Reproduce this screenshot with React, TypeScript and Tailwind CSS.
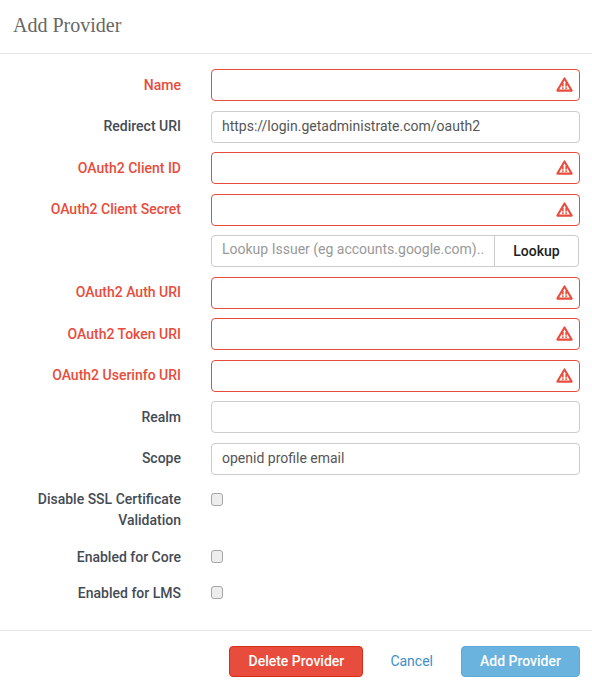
import React from "react";

const Warn = () => (
  <svg viewBox="0 0 18 16" className="absolute right-[7px] top-[8px] w-[17px] h-[15px]">
    <path d="M9 1.5 L16.6 14.5 H1.4 Z" fill="none" stroke="#e74c3c" strokeWidth="2.2" strokeLinejoin="round" />
    <rect x="6.4" y="6.2" width="1.7" height="4" fill="#e74c3c" />
    <rect x="9.9" y="6.2" width="1.7" height="4" fill="#e74c3c" />
    <rect x="6.4" y="11" width="1.7" height="1.7" fill="#e74c3c" />
    <rect x="9.9" y="11" width="1.7" height="1.7" fill="#e74c3c" />
  </svg>
);

const Row = ({ label, error, value }: { label: string; error?: boolean; value?: string }) => (
  <div className="flex items-center mb-[9.5px] h-[32px]">
    <label className={`w-[181px] text-right font-medium ${error ? "text-[#e74c3c]" : "text-[#444b55]"}`}>{label}</label>
    <div className="relative ml-[30px] w-[369px] h-full">
      <div className={`h-full rounded-[4px] border bg-white px-[10px] flex items-center ${error ? "border-[#e74c3c]" : "border-[#ccc]"} text-[#555]`}>
        {value}
      </div>
      {error && <Warn />}
    </div>
  </div>
);

const Check = ({ label, boxClass }: { label: React.ReactNode; boxClass: string }) => (
  <div className="flex items-start">
    <label className="w-[181px] text-right font-medium text-[#444b55] leading-[21px]">{label}</label>
    <span className={`ml-[30px] w-[12px] h-[13px] rounded-[3px] border border-[#a6a6a6] bg-[#ededed] ${boxClass}`} />
  </div>
);

export default function App() {
  return (
    <div className="w-[592px] h-[690px] bg-white text-[14px] font-['Roboto',sans-serif] overflow-hidden">
      <div className="h-[54px] border-b border-[#e5e5e5] pl-[13px] pt-[12px]">
        <h1 className="text-[20px] leading-[26px] font-['Liberation_Serif',serif] font-normal text-[#666]">Add Provider</h1>
      </div>
      <div className="pt-[15px]">
        <Row label="Name" error />
        <Row label="Redirect URI" value="https://login.getadministrate.com/oauth2" />
        <Row label="OAuth2 Client ID" error />
        <Row label="OAuth2 Client Secret" error />
        <div className="flex items-center mb-[9.5px] h-[32px]">
          <div className="ml-[211px] w-[368px] h-full flex rounded-[4px] border border-[#ccc]">
            <div className="flex-1 pl-[10px] pr-[11px] pb-[3px] flex items-center text-[#999] whitespace-nowrap overflow-hidden">Lookup Issuer (eg accounts.google.com)..</div>
            <div className="w-[84px] border-l border-[#ccc] flex items-center justify-center font-medium text-[#222]">Lookup</div>
          </div>
        </div>
        <Row label="OAuth2 Auth URI" error />
        <Row label="OAuth2 Token URI" error />
        <Row label="OAuth2 Userinfo URI" error />
        <Row label="Realm" />
        <Row label="Scope" value="openid profile email" />
      </div>
      <div className="flex flex-col pt-[5px]">
        <Check label={<>Disable SSL Certificate<br />Validation</>} boxClass="mt-[4px]" />
        <div className="h-[16px]" />
        <Check label="Enabled for Core" boxClass="mt-[3px]" />
        <div className="h-[15px]" />
        <Check label="Enabled for LMS" boxClass="mt-[3px]" />
      </div>
      <div className="mt-[26px] border-t border-[#e5e5e5] pt-[15px] pr-[12px] flex items-center justify-end">
        <button className="w-[134px] h-[31px] rounded-[4px] border border-[#d62c1a] bg-[#e74c3c] text-white font-medium">Delete Provider</button>
        <button className="ml-[27px] text-[#3d8ecb]">Cancel</button>
        <button className="ml-[28px] w-[119px] h-[31px] rounded-[4px] border border-[#5aa9d6] bg-[#69b3de] text-white font-medium">Add Provider</button>
      </div>
    </div>
  );
}
